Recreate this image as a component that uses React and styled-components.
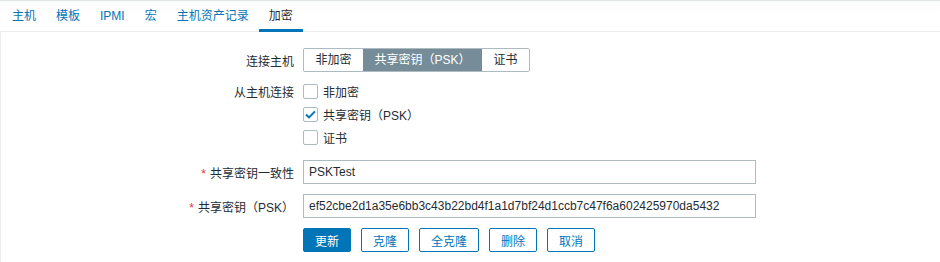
import React, { useState } from "react";
import styled, { createGlobalStyle } from "styled-components";

const GlobalStyle = createGlobalStyle`
  body {
    margin: 0;
    background: #fff;
    font-family: "Liberation Sans", Arial, "Noto Sans CJK SC", sans-serif;
    font-size: 12px;
    color: #1f2c33;
  }
`;

const tabs = ["主机", "模板", "IPMI", "宏", "主机资产记录", "加密"];
const modes = ["非加密", "共享密钥（PSK）", "证书"];

const App = () => {
  const [mode, setMode] = useState(1);
  const [fromHost, setFromHost] = useState([false, true, false]);

  const toggle = (i) =>
    setFromHost((prev) => prev.map((v, j) => (j === i ? !v : v)));

  return (
    <>
      <GlobalStyle />
      <Page>
        <TabBar>
          {tabs.map((t) => (
            <Tab key={t} active={t === "加密"}>
              {t}
            </Tab>
          ))}
        </TabBar>

        <Panel>
          <Form>
            <Label>连接主机</Label>
            <Segmented>
              {modes.map((m, i) => (
                <Segment key={m} active={i === mode} onClick={() => setMode(i)}>
                  {m}
                </Segment>
              ))}
            </Segmented>

            <Label top>从主机连接</Label>
            <CheckList>
              {modes.map((m, i) => (
                <CheckRow key={m} onClick={() => toggle(i)}>
                  <Box>
                    {fromHost[i] && (
                      <svg width="11" height="9" viewBox="0 0 11 9">
                        <path
                          d="M1 4.6 L4 7.4 L10 1.4"
                          fill="none"
                          stroke="#0275b8"
                          strokeWidth="2"
                        />
                      </svg>
                    )}
                  </Box>
                  {m}
                </CheckRow>
              ))}
            </CheckList>

            <Label>
              <Star>*</Star>共享密钥一致性
            </Label>
            <TextInput defaultValue="PSKTest" />

            <Label>
              <Star>*</Star>共享密钥（PSK）
            </Label>
            <TextInput defaultValue="ef52cbe2d1a35e6bb3c43b22bd4f1a1d7bf24d1ccb7c47f6a602425970da5432" />

            <span />
            <Buttons>
              <Button primary>更新</Button>
              <Button>克隆</Button>
              <Button>全克隆</Button>
              <Button>删除</Button>
              <Button>取消</Button>
            </Buttons>
          </Form>
        </Panel>
      </Page>
    </>
  );
};

export default App;

const Page = styled.div`
  width: 940px;
  height: 262px;
  overflow: hidden;
`;

const TabBar = styled.ul`
  display: flex;
  margin: 0;
  padding: 0 0 0 2px;
  list-style: none;
  height: 30px;
  border-top: 1px solid #dfe4e7;
  border-bottom: 1px solid #ebeef0;
  background: linear-gradient(#fafbfb, #fff 12px);
`;

const Tab = styled.li`
  padding: 0 10px;
  line-height: 29px;
  color: ${({ active }) => (active ? "#1f2c33" : "#0275b8")};
  border-bottom: 3px solid ${({ active }) => (active ? "#0275b8" : "transparent")};
  height: 27px;
  margin-top: 1px;
  cursor: pointer;
`;

const Panel = styled.div`
  border-left: 1px solid #ebeef0;
  padding: 16px 0 0;
  height: 230px;
`;

const Form = styled.div`
  display: grid;
  grid-template-columns: 293px 1fr;
  column-gap: 9px;
  row-gap: 10px;
  align-items: center;
`;

const Label = styled.div`
  text-align: right;
  align-self: ${({ top }) => (top ? "start" : "center")};
  line-height: ${({ top }) => (top ? "23px" : "normal")};
`;

const Star = styled.span`
  color: #e33734;
  margin-right: 4px;
`;

const Segmented = styled.div`
  display: flex;
  width: max-content;
  height: 24px;
  border: 1px solid #acbbc2;
  border-radius: 2px;
  box-sizing: border-box;
  overflow: hidden;
`;

const Segment = styled.div`
  padding: 0 11.5px;
  line-height: 22px;
  cursor: pointer;
  background: ${({ active }) => (active ? "#768d99" : "#fff")};
  color: ${({ active }) => (active ? "#fff" : "#1f2c33")};
`;

const CheckList = styled.div`
  display: flex;
  flex-direction: column;
  margin: -2px 0 1px;
`;

const CheckRow = styled.label`
  display: flex;
  align-items: center;
  gap: 5px;
  height: 23px;
  cursor: pointer;
`;

const Box = styled.span`
  display: flex;
  align-items: center;
  justify-content: center;
  width: 15px;
  height: 15px;
  box-sizing: border-box;
  border: 1px solid #acbbc2;
  border-radius: 2px;
  background: #fff;
`;

const TextInput = styled.input`
  width: 453px;
  height: 24px;
  box-sizing: border-box;
  border: 1px solid #acbbc2;
  padding: 0 5px;
  font: inherit;
  color: #1f2c33;
  outline: none;
`;

const Buttons = styled.div`
  display: flex;
  gap: 10px;
`;

const Button = styled.button`
  height: 24px;
  padding: 0 11px;
  font: inherit;
  border-radius: 2px;
  border: 1px solid #0275b8;
  background: ${({ primary }) => (primary ? "#0275b8" : "#fff")};
  color: ${({ primary }) => (primary ? "#fff" : "#0275b8")};
  cursor: pointer;
`;
